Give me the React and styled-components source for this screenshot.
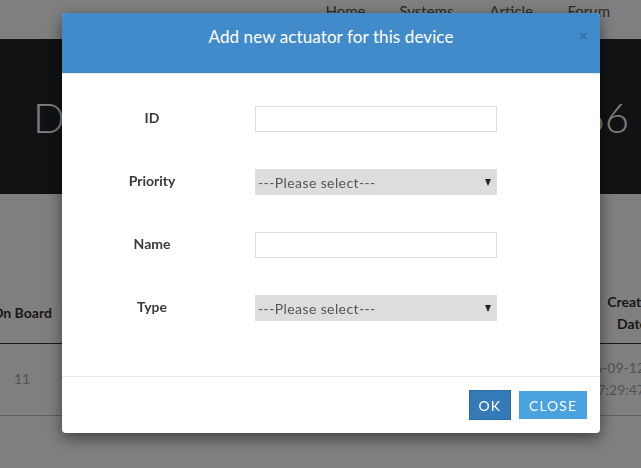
import React from "react";
import styled, { createGlobalStyle } from "styled-components";

const Global = createGlobalStyle`
  html, body { margin: 0; padding: 0; background: #fff; overflow: hidden; }
  body { font-family: "Lato", "Open Sans", sans-serif; color: #333; }
  * { box-sizing: border-box; }
`;

const Page = styled.div`
  width: 641px;
  height: 468px;
  overflow: hidden;
  position: relative;
`;

const Navbar = styled.nav`
  height: 39px;
  background: #fff;
  display: grid;
  grid-template-columns: 74px 90px 78px auto;
  justify-content: end;
  padding-right: 31px;
  padding-top: 1px;
`;

const NavLink = styled.a`
  font-size: 15px;
  line-height: 20px;
  color: #555;
  text-decoration: none;
`;

const Hero = styled.header`
  height: 155px;
  background: #222428;
  display: flex;
  align-items: center;
`;

const HeroTitle = styled.h1`
  margin: 0;
  flex: 1;
  display: flex;
  justify-content: space-between;
  padding: 0 12px 0 33px;
  font-weight: 300;
  font-size: 42px;
  line-height: 50px;
  color: #fff;
  white-space: nowrap;
  overflow: hidden;
`;

const Content = styled.section`
  padding-top: 89px;
`;

const Row = styled.div`
  display: grid;
  grid-template-columns: 104px 1fr 100px;
  margin: 0 -41px 0 -30px;
  border-bottom: 1px solid ${(p) => (p.$head ? "#333" : "#bbb")};
  padding: ${(p) => (p.$head ? "8px 0" : "13px 0 14px")};
  align-items: center;
`;

const Cell = styled.div`
  text-align: ${(p) => p.$align || "center"};
  justify-self: ${(p) => (p.$align === "right" ? "end" : "stretch")};
  white-space: ${(p) => (p.$align === "right" ? "nowrap" : "normal")};
  padding-right: ${(p) => (p.$align === "right" ? "37px" : "0")};
  font-size: 14px;
  line-height: 22px;
  font-weight: ${(p) => (p.$head ? 700 : 400)};
  color: ${(p) => (p.$head ? "#333" : "#a5a5a5")};
`;

const Overlay = styled.div`
  position: fixed;
  inset: 0;
  background: rgba(0, 0, 0, 0.5);
`;

const Modal = styled.div`
  position: fixed;
  top: 13px;
  left: 62px;
  width: 538px;
  background: #fff;
  border-radius: 4px;
  overflow: hidden;
  box-shadow: 0 5px 15px rgba(0, 0, 0, 0.5);
`;

const ModalHeader = styled.div`
  position: relative;
  height: 61px;
  background: #428bca;
  border-bottom: 1px solid #e5e5e5;
  padding-top: 13px;
  text-align: center;
`;

const ModalTitle = styled.h4`
  margin: 0;
  font-size: 17px;
  line-height: 22px;
  font-weight: 400;
  letter-spacing: 0.1px;
  color: #fff;
`;

const CloseX = styled.button`
  position: absolute;
  top: 13px;
  right: 12px;
  border: 0;
  background: none;
  padding: 0;
  font-size: 16px;
  line-height: 18px;
  font-weight: 700;
  color: #000;
  opacity: 0.2;
  font-family: "Lato", sans-serif;
`;

const ModalBody = styled.div`
  padding: 32px 0 55px;
  display: grid;
  grid-template-columns: 180px 242px;
  column-gap: 13px;
  row-gap: 37px;
  align-items: center;
`;

const Label = styled.label`
  text-align: center;
  font-size: 14px;
  font-weight: 700;
  color: #3a3a3a;
  margin-top: -3px;
`;

const TextInput = styled.input`
  height: 26px;
  width: 242px;
  border: 1px solid #ddd;
  border-radius: 0;
  padding: 0 4px;
  font: 14px "Lato", sans-serif;
  outline: none;
`;

const SelectWrap = styled.div`
  position: relative;
  height: 26px;
`;

const Select = styled.select`
  appearance: none;
  -webkit-appearance: none;
  width: 242px;
  height: 26px;
  border: 1px solid #ddd;
  border-radius: 0;
  background: #ddd;
  padding: 1px 20px 0 2px;
  font: 14px "Lato", sans-serif;
  letter-spacing: 0.4px;
  color: #555;
  outline: none;
`;

const Arrow = styled.span`
  position: absolute;
  right: 6px;
  top: 10px;
  width: 0;
  height: 0;
  border-left: 3.5px solid transparent;
  border-right: 3.5px solid transparent;
  border-top: 7px solid #222;
  pointer-events: none;
`;

const ModalFooter = styled.div`
  border-top: 1px solid #e5e5e5;
  height: 57px;
  display: flex;
  justify-content: flex-end;
  align-items: center;
  gap: 8px;
  padding-right: 13px;
`;

const Button = styled.button`
  height: ${(p) => (p.$primary ? "30px" : "28px")};
  padding: 0 ${(p) => (p.$primary ? "9px" : "10px")};
  border: ${(p) => (p.$primary ? "1px solid #2e6da4" : "0")};
  background: ${(p) => (p.$primary ? "#337ab7" : "#4aa3df")};
  color: #fff;
  font: 14px "Lato", sans-serif;
  letter-spacing: 1px;
  text-transform: uppercase;
  border-radius: 0;
`;

function SelectField() {
  return (
    <SelectWrap>
      <Select defaultValue="">
        <option value="">---Please select---</option>
      </Select>
      <Arrow />
    </SelectWrap>
  );
}

export default function App() {
  return (
    <Page>
      <Global />
      <Navbar>
        <NavLink>Home</NavLink>
        <NavLink>Systems</NavLink>
        <NavLink>Article</NavLink>
        <NavLink>Forum</NavLink>
      </Navbar>
      <Hero>
        <HeroTitle>
          <span>Device Details</span>
          <span>ESP8266</span>
        </HeroTitle>
      </Hero>
      <Content>
        <Row $head>
          <Cell $head>On Board</Cell>
          <Cell $head>Sensors</Cell>
          <Cell $head>
            Created
            <br />
            Date
          </Cell>
        </Row>
        <Row>
          <Cell>11</Cell>
          <Cell>2</Cell>
          <Cell $align="right">
            2016-09-12
            <br />
            17:29:47
          </Cell>
        </Row>
      </Content>
      <Overlay />
      <Modal>
        <ModalHeader>
          <ModalTitle>Add new actuator for this device</ModalTitle>
          <CloseX>×</CloseX>
        </ModalHeader>
        <ModalBody>
          <Label>ID</Label>
          <TextInput />
          <Label>Priority</Label>
          <SelectField />
          <Label>Name</Label>
          <TextInput />
          <Label>Type</Label>
          <SelectField />
        </ModalBody>
        <ModalFooter>
          <Button $primary>OK</Button>
          <Button>Close</Button>
        </ModalFooter>
      </Modal>
    </Page>
  );
}
